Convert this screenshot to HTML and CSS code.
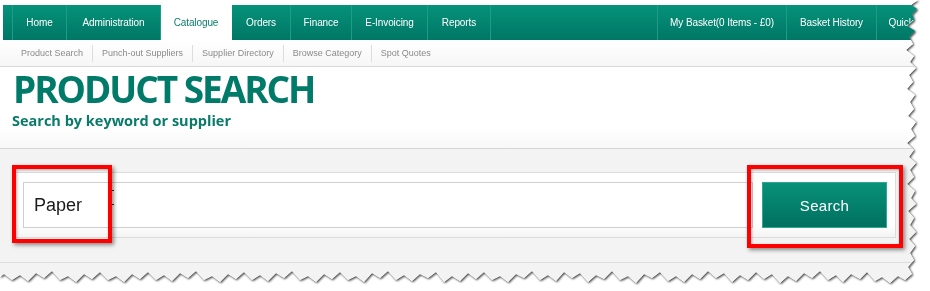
FILE: index.html
```html
<!DOCTYPE html>
<html>
<head>
<meta charset="utf-8">
<link rel="stylesheet" href="styles.css">
</head>
<body>
<div class="frame">
  <div class="sheet">
    <div class="topstrip"></div>
    <nav class="mainnav">
      <div class="tab tab-stub"></div>
      <div class="tab w-home">Home</div>
      <div class="tab w-admin">Administration</div>
      <div class="tab w-cat active">Catalogue</div>
      <div class="tab w-orders">Orders</div>
      <div class="tab w-fin">Finance</div>
      <div class="tab w-einv">E-Invoicing</div>
      <div class="tab w-rep">Reports</div>
      <div class="tab tab-fill"></div>
      <div class="tab w-basket">My Basket(0 Items - £0)</div>
      <div class="tab w-hist">Basket History</div>
      <div class="tab w-quick">Quick</div>
    </nav>
    <div class="subnav">
      <span class="sub">Product Search</span>
      <span class="sub">Punch-out Suppliers</span>
      <span class="sub">Supplier Directory</span>
      <span class="sub">Browse Category</span>
      <span class="sub last">Spot Quotes</span>
    </div>
    <header class="pagehead">
      <h1 class="title">PRODUCT SEARCH</h1>
      <div class="subtitle">Search by keyword or supplier</div>
    </header>
    <section class="searcharea">
      <div class="panel">
        <div class="inputbox">Paper</div>
        <div class="btn">Search</div>
      </div>
      <div class="lowline"></div>
    </section>
    <div class="mark mark-a"></div>
    <div class="mark mark-b"></div>
    <div class="redbox red-input"></div>
    <div class="redbox red-btn"></div>
  </div>
</div>
</body>
</html>
```

FILE: styles.css
```css
html, body {
  margin: 0;
  padding: 0;
  background: #ffffff;
}
.frame {
  width: 930px;
  height: 291px;
  filter: drop-shadow(1px 1px 1px rgba(0,0,0,0.75));
}
.sheet {
  position: relative;
  width: 925px;
  height: 291px;
  background: #ffffff;
  font-family: "Liberation Sans", Arial, sans-serif;
  clip-path: polygon(918px 0px, 911px 5px, 917px 9px, 912px 14px, 914px 20px, 907px 26px, 915px 31px, 909px 37px, 913px 44px, 906px 50px, 914px 56px, 910px 62px, 916px 68px, 909px 75px, 913px 82px, 907px 89px, 915px 95px, 910px 102px, 914px 109px, 908px 116px, 916px 122px, 911px 129px, 915px 136px, 907px 143px, 914px 150px, 909px 157px, 916px 163px, 910px 170px, 914px 177px, 907px 184px, 915px 191px, 911px 198px, 916px 204px, 908px 211px, 914px 218px, 910px 225px, 916px 232px, 909px 239px, 915px 246px, 910px 253px, 914px 260px, 908px 267px, 912px 274px, 905px 280px, 898px 276px, 890px 283px, 882px 277px, 875px 281px, 867px 272px, 860px 279px, 851px 274px, 843px 282px, 836px 275px, 828px 280px, 820px 271px, 812px 278px, 804px 273px, 796px 281px, 788px 276px, 780px 283px, 772px 274px, 764px 279px, 756px 272px, 748px 280px, 740px 275px, 732px 282px, 724px 273px, 716px 278px, 708px 271px, 700px 279px, 692px 274px, 684px 282px, 676px 276px, 668px 281px, 660px 272px, 652px 278px, 644px 274px, 636px 283px, 628px 276px, 620px 280px, 612px 271px, 604px 279px, 596px 275px, 588px 282px, 580px 273px, 572px 278px, 564px 272px, 556px 281px, 548px 275px, 540px 280px, 532px 271px, 524px 278px, 516px 274px, 508px 282px, 500px 276px, 492px 280px, 484px 272px, 476px 279px, 468px 273px, 460px 281px, 452px 276px, 444px 282px, 436px 272px, 428px 278px, 420px 274px, 412px 281px, 404px 275px, 396px 280px, 388px 271px, 380px 278px, 372px 273px, 364px 282px, 356px 276px, 348px 280px, 340px 272px, 332px 279px, 324px 274px, 316px 282px, 308px 276px, 300px 280px, 292px 271px, 284px 278px, 276px 273px, 268px 281px, 260px 275px, 252px 280px, 244px 272px, 236px 279px, 228px 274px, 220px 282px, 212px 276px, 204px 280px, 196px 271px, 188px 278px, 180px 273px, 172px 281px, 164px 275px, 156px 280px, 148px 272px, 140px 279px, 132px 274px, 124px 282px, 116px 276px, 108px 280px, 100px 272px, 92px 279px, 84px 274px, 76px 282px, 68px 276px, 60px 280px, 52px 271px, 44px 278px, 36px 273px, 28px 281px, 20px 275px, 12px 280px, 4px 274px, 0px 277px, 0px 0px);
}
.topstrip {
  height: 5px;
  background: #ffffff;
}
.mainnav {
  display: flex;
  height: 35px;
  margin-left: 3px;
  background: linear-gradient(#06927a, #007766);
}
.tab {
  box-sizing: border-box;
  height: 35px;
  display: flex;
  align-items: center;
  justify-content: center;
  color: #ffffff;
  font-size: 10px;
  letter-spacing: -0.1px;
  white-space: nowrap;
  border-right: 1px solid #1c9e86;
  background: linear-gradient(#06927a, #007766);
}
.tab-stub { width: 10px; }
.w-home { width: 54px; }
.w-admin { width: 94px; }
.w-cat { width: 71px; }
.w-orders { width: 59px; }
.w-fin { width: 61px; }
.w-einv { width: 76px; }
.w-rep { width: 63px; }
.tab-fill { flex: 1; }
.w-basket { width: 129px; }
.w-hist { width: 90px; }
.w-quick { width: 48px; border-right: none; }
.tab.active {
  background: #ffffff;
  color: #0a7d6b;
  border-right-color: #ffffff;
}
.subnav {
  box-sizing: border-box;
  height: 27px;
  display: flex;
  align-items: center;
  padding-left: 12px;
  background: linear-gradient(#ffffff, #f6f6f6);
  border-bottom: 1px solid #d8d8d8;
}
.sub {
  font-size: 9px;
  color: #8a8a8a;
  padding: 0 9px;
  line-height: 17px;
  border-right: 1px solid #dddddd;
}
.sub.last { border-right: none; }
.pagehead {
  box-sizing: border-box;
  height: 82px;
  padding: 4px 0 0 13px;
  background: linear-gradient(#ffffff 75%, #f7f7f7);
  border-bottom: 1px solid #d6d6d6;
}
.title {
  margin: 0;
  font-family: "Open Sans", sans-serif;
  font-weight: 700;
  font-size: 37px;
  line-height: 36px;
  letter-spacing: -2.05px;
  color: #007a69;
}
.subtitle {
  margin-top: 5px;
  margin-left: -1px;
  font-family: "Open Sans", sans-serif;
  font-weight: 700;
  font-size: 14.5px;
  line-height: 18px;
  color: #087b69;
}
.searcharea {
  box-sizing: border-box;
  height: 140px;
  padding: 23px 0 0 12px;
  background: #f3f3f3;
}
.panel {
  box-sizing: border-box;
  width: 884px;
  height: 66px;
  display: flex;
  align-items: flex-start;
  gap: 9px;
  padding: 9px 8px 0 10px;
  background: linear-gradient(#ffffff 80%, #f4f4f4);
  border: 1px solid #dcdcdc;
}
.inputbox {
  box-sizing: border-box;
  width: 730px;
  height: 46px;
  border: 1px solid #cfcfcf;
  background: #ffffff;
  padding-left: 10px;
  display: flex;
  align-items: center;
  font-family: "Liberation Sans", Arial, sans-serif;
  font-size: 18px;
  color: #1a1a1a;
}
.btn {
  box-sizing: border-box;
  width: 125px;
  height: 46px;
  display: flex;
  align-items: center;
  justify-content: center;
  background: linear-gradient(#08917a, #00705f);
  border: 1px solid #2fa891;
  color: #ffffff;
  font-family: "Liberation Sans", Arial, sans-serif;
  font-size: 15px;
  letter-spacing: 0.3px;
}
.lowline {
  margin-top: 24px;
  margin-left: -12px;
  height: 1px;
  background: #dddddd;
}
.redbox {
  position: absolute;
  box-sizing: border-box;
  border: 4px solid #ff0000;
  box-shadow: 2px 2px 4px rgba(0,0,0,0.45), inset 1px 1px 3px rgba(0,0,0,0.3);
}
.red-input {
  left: 12px;
  top: 165px;
  width: 100px;
  height: 78px;
}
.red-btn {
  left: 747px;
  top: 165px;
  width: 156px;
  height: 83px;
}
.mark {
  position: absolute;
  width: 6px;
  height: 1px;
  background: #222222;
  left: 108px;
}
.mark-a { top: 190px; }
.mark-b { top: 204px; }
```
